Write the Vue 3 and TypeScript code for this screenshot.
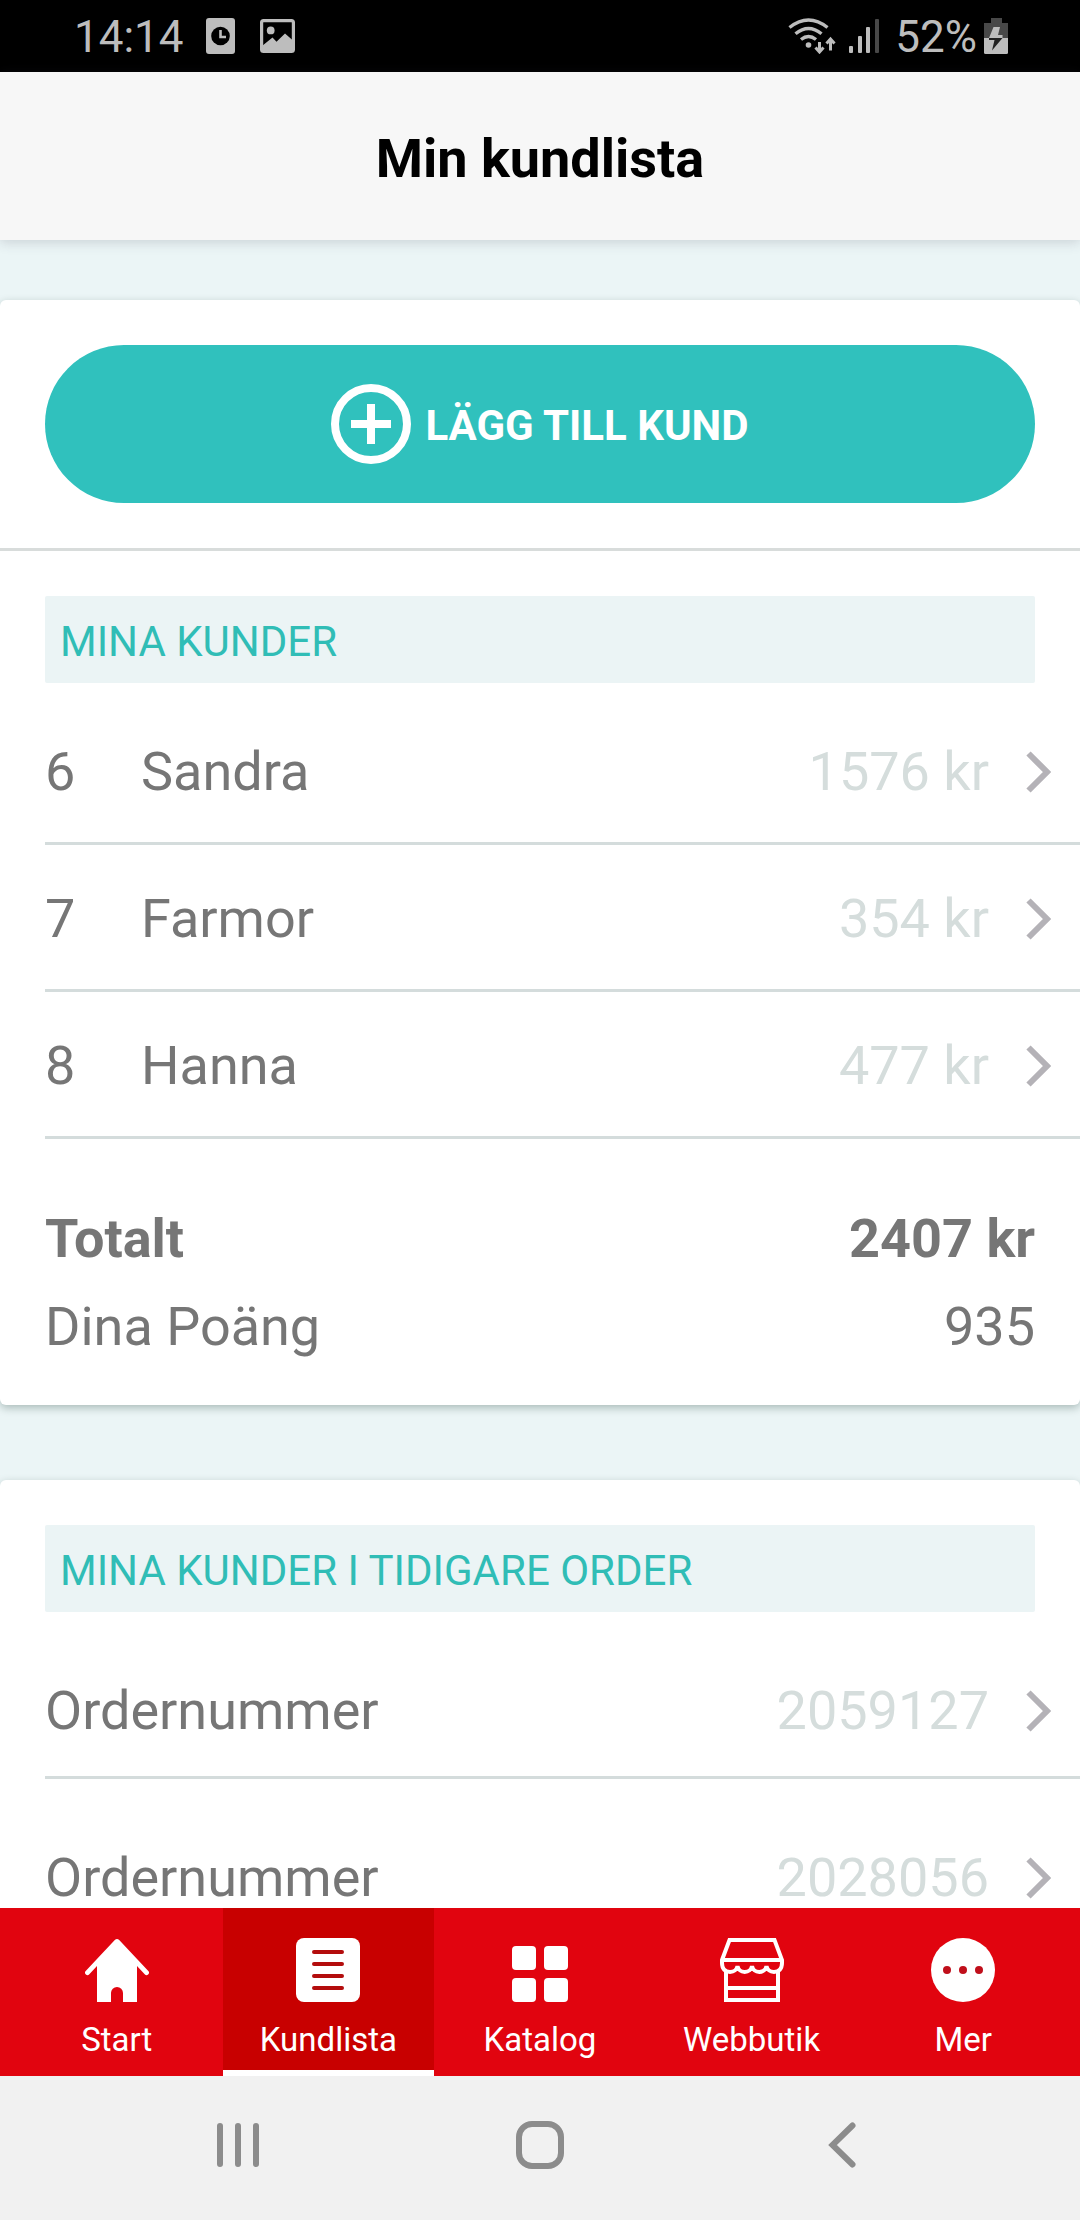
<script setup lang="ts">
interface Customer {
  id: number
  name: string
  amount: string
}

interface Tab {
  id: 'start' | 'list' | 'catalog' | 'shop' | 'more'
  label: string
}

const customers: Customer[] = [
  { id: 6, name: 'Sandra', amount: '1576 kr' },
  { id: 7, name: 'Farmor', amount: '354 kr' },
  { id: 8, name: 'Hanna', amount: '477 kr' },
]

const orders: string[] = ['2059127', '2028056']

const tabs: Tab[] = [
  { id: 'start', label: 'Start' },
  { id: 'list', label: 'Kundlista' },
  { id: 'catalog', label: 'Katalog' },
  { id: 'shop', label: 'Webbutik' },
  { id: 'more', label: 'Mer' },
]

const activeTab: Tab['id'] = 'list'
</script>

<template>
  <div class="screen">
    <div class="status">
      <span class="status-text">14:14</span>
      <svg class="alarm" width="29" height="36" viewBox="0 0 29 36" aria-hidden="true">
        <rect width="29" height="36" rx="3" fill="#bdbdbd" />
        <circle cx="14.5" cy="18" r="9.3" fill="#000" />
        <path d="M14.5 12v7h5.500" fill="none" stroke="#bdbdbd" stroke-width="2.600" />
      </svg>
      <svg class="picture" width="35" height="34" viewBox="0 0 35 34" aria-hidden="true">
        <rect x="1.600" y="1.600" width="31.800" height="30.800" rx="2" fill="none" stroke="#bdbdbd" stroke-width="3.200" />
        <circle cx="10.700" cy="11.400" r="3.900" fill="#bdbdbd" />
        <path d="M2 27l10.500-8.500 4 4.200L25 14.500l8 7V32H2z" fill="#bdbdbd" />
      </svg>
      <span class="spacer"></span>
      <svg class="wifi" width="48" height="36" viewBox="0 0 48 36" fill="none" stroke="#bdbdbd" stroke-width="3.400" aria-hidden="true">
        <path d="M1.500 9.500Q20.500-5.500 39.500 9.500" />
        <path d="M7.500 15.800Q20.500 5 33.500 15.800" />
        <path d="M13 21.500Q20.500 15.500 28 21.500" />
        <circle cx="20.500" cy="27" r="2.800" fill="#bdbdbd" stroke="none" />
        <path d="M31.500 24v9M27.500 29.500l4 4.500 4-4.500M42.500 32.500v-10M38.500 25.500l4-4.500 4 4.500" stroke-width="3" />
      </svg>
      <svg class="signal" width="32" height="34" viewBox="0 0 32 34" aria-hidden="true">
        <rect x="1" y="27" width="4" height="7" rx="1" fill="#bdbdbd" />
        <rect x="10" y="17" width="4" height="17" rx="1" fill="#bdbdbd" />
        <rect x="18" y="8" width="4" height="26" rx="1" fill="#bdbdbd" />
        <rect x="27" y="0" width="4" height="34" rx="1" fill="#484848" />
      </svg>
      <span class="status-text">52%</span>
      <svg class="battery" width="24" height="36" viewBox="0 0 24 36" aria-hidden="true">
        <path d="M7 0h11v5h6v15H0V5h7z" fill="#484848" />
        <path d="M0 20h24v14.500a1.500 1.500 0 0 1-1.500 1.500h-21A1.500 1.500 0 0 1 0 34.500z" fill="#bdbdbd" />
        <path d="M9.500 9H16l-2 8h4.500v3H5z" fill="#bdbdbd" />
        <path d="M5 20h13.500L8 32.500 10.500 22H5z" fill="#222" />
      </svg>
    </div>

    <header class="header">
      <h1>Min kundlista</h1>
    </header>

    <main class="content">
      <section class="card">
        <div class="add">
          <button type="button" class="add-button">
            <svg width="80" height="80" viewBox="0 0 80 80" fill="none" stroke="#fff" stroke-width="8" aria-hidden="true">
              <circle cx="40" cy="40" r="36" />
              <path d="M40 20v40M20 40h40" />
            </svg>
            <span>LÄGG TILL KUND</span>
          </button>
        </div>

        <h2 class="section-title">MINA KUNDER</h2>
        <ul class="rows customers">
          <li v-for="customer in customers" :key="customer.id">
            <a href="#" class="row">
              <span class="number">{{ customer.id }}</span>
              <span class="name">{{ customer.name }}</span>
              <span class="value">{{ customer.amount }}</span>
              <svg class="chevron" width="25" height="42" viewBox="0 0 25 42" aria-hidden="true">
                <path d="M2.500 2.500L21 21 2.500 39.500" />
              </svg>
            </a>
          </li>
        </ul>

        <dl class="totals">
          <div class="total strong">
            <dt>Totalt</dt>
            <dd>2407 kr</dd>
          </div>
          <div class="total">
            <dt>Dina Poäng</dt>
            <dd>935</dd>
          </div>
        </dl>
      </section>

      <section class="card">
        <h2 class="section-title">MINA KUNDER I TIDIGARE ORDER</h2>
        <ul class="rows orders">
          <li v-for="order in orders" :key="order">
            <a href="#" class="row">
              <span class="name">Ordernummer</span>
              <span class="value">{{ order }}</span>
              <svg class="chevron" width="25" height="42" viewBox="0 0 25 42" aria-hidden="true">
                <path d="M2.500 2.500L21 21 2.500 39.500" />
              </svg>
            </a>
          </li>
        </ul>
      </section>
    </main>

    <nav class="tabs">
      <a
        v-for="tab in tabs"
        :key="tab.id"
        href="#"
        class="tab"
        :class="{ active: tab.id === activeTab }"
        :aria-current="tab.id === activeTab ? 'page' : undefined"
      >
        <svg width="64" height="64" viewBox="0 0 64 64" fill="#fff" aria-hidden="true">
          <path
            v-if="tab.id === 'start'"
            d="M29.800 2a3.200 3.200 0 0 1 4.400 0L63.300 33a2.400 2.400 0 0 1-3.600 3.300L52 28V64H38v-9a6 6 0 0 0-12 0v9H12V28l-7.700 8.300A2.400 2.400 0 0 1 .7 33z"
          />
          <template v-else-if="tab.id === 'list'">
            <rect width="64" height="64" rx="8" />
            <path d="M18 14h28M18 26h28M18 38h28M18 50h28" stroke="#b30d0d" stroke-width="4" stroke-linecap="round" />
          </template>
          <template v-else-if="tab.id === 'catalog'">
            <rect x="4" y="8" width="24" height="24" rx="4" />
            <rect x="36" y="8" width="24" height="24" rx="4" />
            <rect x="4" y="40" width="24" height="24" rx="4" />
            <rect x="36" y="40" width="24" height="24" rx="4" />
          </template>
          <g v-else-if="tab.id === 'shop'" fill="none" stroke="#fff" stroke-width="4">
            <path d="M2 22L9.500 2h45L62 22z" />
            <path d="M2 22v3c0 6 3.500 9 8 9 4 0 7-2.500 7.500-6 .5 3.500 3.500 6 7.200 6s6.800-2.500 7.300-6c.5 3.500 3.500 6 7.300 6s6.700-2.500 7.200-6c.5 3.500 3.500 6 7.500 6 4.500 0 8-3 8-9v-3" />
            <path d="M6 34v28h52V34M6 50h52" />
          </g>
          <template v-else>
            <circle cx="32" cy="32" r="32" />
            <g fill="#c00f1b">
              <circle cx="16" cy="32" r="4" />
              <circle cx="32" cy="32" r="4" />
              <circle cx="48" cy="32" r="4" />
            </g>
          </template>
        </svg>
        <span>{{ tab.label }}</span>
      </a>
    </nav>

    <div class="system">
      <button type="button" aria-label="Senaste appar">
        <svg width="48" height="48" viewBox="0 0 48 48">
          <path d="M6 5v38M24 5v38M42 5v38" />
        </svg>
      </button>
      <button type="button" aria-label="Hem">
        <svg width="48" height="48" viewBox="0 0 48 48">
          <rect x="3" y="3" width="42" height="42" rx="13" />
        </svg>
      </button>
      <button type="button" aria-label="Tillbaka">
        <svg width="48" height="48" viewBox="0 0 48 48">
          <path d="M34.500 4.500L14.500 24l20 19.500" />
        </svg>
      </button>
    </div>
  </div>
</template>

<style>
body {
  margin: 0;
}
</style>

<style scoped>
.screen {
  display: flex;
  flex-direction: column;
  height: 100vh;
  overflow: hidden;
  background: #ebf5f6;
  color: #767676;
  font-family: Roboto, "Liberation Sans", sans-serif;
  font-size: 54px;
  line-height: 64px;
}

.status {
  display: flex;
  flex: none;
  align-items: center;
  height: 72px;
  padding: 0 72px 0 74px;
  background: #000;
  color: #bdbdbd;
}

.status svg {
  flex: none;
}

.status-text {
  padding-top: 2px;
  font-size: 44px;
}

.alarm {
  margin-left: 22px;
}

.picture {
  margin-left: 25px;
}

.spacer {
  flex: 1;
}

.signal {
  margin: 0 15px 0 12px;
}

.battery {
  margin-left: 7px;
}

.header {
  position: relative;
  z-index: 1;
  display: flex;
  flex: none;
  align-items: center;
  justify-content: center;
  box-sizing: border-box;
  height: 168px;
  padding-top: 5px;
  background: #f7f7f7;
  box-shadow: 0 2px 12px rgba(60, 60, 80, 0.2);
}

h1 {
  margin: 0;
  color: #000;
  font-size: 54px;
  font-weight: 700;
}

.content {
  flex: 1;
  min-height: 0;
  padding-top: 60px;
  overflow-y: auto;
  scrollbar-width: none;
}

.card {
  margin-bottom: 75px;
  border-radius: 6px;
  background: #fff;
  box-shadow: 0 3px 8px rgba(0, 40, 30, 0.28);
}

.add {
  padding: 45px;
  border-bottom: 3px solid #d8dcdb;
}

.add-button {
  display: flex;
  align-items: center;
  justify-content: center;
  gap: 14px;
  width: 100%;
  height: 158px;
  padding: 0;
  border: 0;
  border-radius: 79px;
  background: #30c1bd;
  color: #fff;
  font: 700 42px/50px Roboto, "Liberation Sans", sans-serif;
}

.add-button span {
  padding-top: 3px;
}

.section-title {
  box-sizing: border-box;
  height: 87px;
  margin: 0 45px;
  padding: 21px 15px 0;
  border-radius: 2px;
  background: #ebf4f5;
  color: #30bdb6;
  font-size: 42px;
  font-weight: 400;
  line-height: 50px;
}

.add + .section-title {
  margin-top: 45px;
}

.card:last-child {
  padding-top: 45px;
}

.rows {
  margin: 0;
  padding: 0 0 0 45px;
  list-style: none;
}

.customers {
  margin-top: 15px;
}

.row {
  display: flex;
  align-items: center;
  box-sizing: border-box;
  height: 147px;
  padding: 4px 29px 0 0;
  border-bottom: 3px solid #d4dcdc;
  color: inherit;
  text-decoration: none;
}

.orders .row {
  height: 167px;
  padding-top: 34px;
}

.number {
  width: 96px;
}

.name {
  flex: 1;
}

.value {
  margin-right: 37px;
  color: #d5dddc;
}

.chevron {
  flex: none;
  fill: none;
  stroke: #b4b2b7;
  stroke-width: 6px;
}

.totals {
  margin: 0;
  padding: 56px 45px 34px;
}

.total {
  display: flex;
  justify-content: space-between;
  line-height: 88px;
}

.total dd {
  margin: 0;
}

.strong {
  font-weight: 700;
}

.tabs {
  display: flex;
  flex: none;
  height: 168px;
  padding: 0 11px;
  background: #e1040f;
}

.tab {
  display: flex;
  flex: 1;
  flex-direction: column;
  align-items: center;
  gap: 18px;
  box-sizing: border-box;
  padding-top: 30px;
  border-bottom: 6px solid transparent;
  color: #fff;
  font-size: 33px;
  line-height: 40px;
  text-decoration: none;
}

.tab.active {
  border-bottom-color: #fff;
  background: #c80000;
}

.system {
  display: flex;
  flex: none;
  align-items: center;
  justify-content: center;
  box-sizing: border-box;
  height: 144px;
  padding: 0 87px 6px;
  background: #f1f1f1;
}

.system button {
  display: flex;
  flex: 1;
  align-items: center;
  justify-content: center;
  height: 100%;
  padding: 0;
  border: 0;
  background: none;
}

.system svg {
  fill: none;
  stroke: #8c8c8c;
  stroke-width: 6px;
  stroke-linecap: round;
}
</style>
